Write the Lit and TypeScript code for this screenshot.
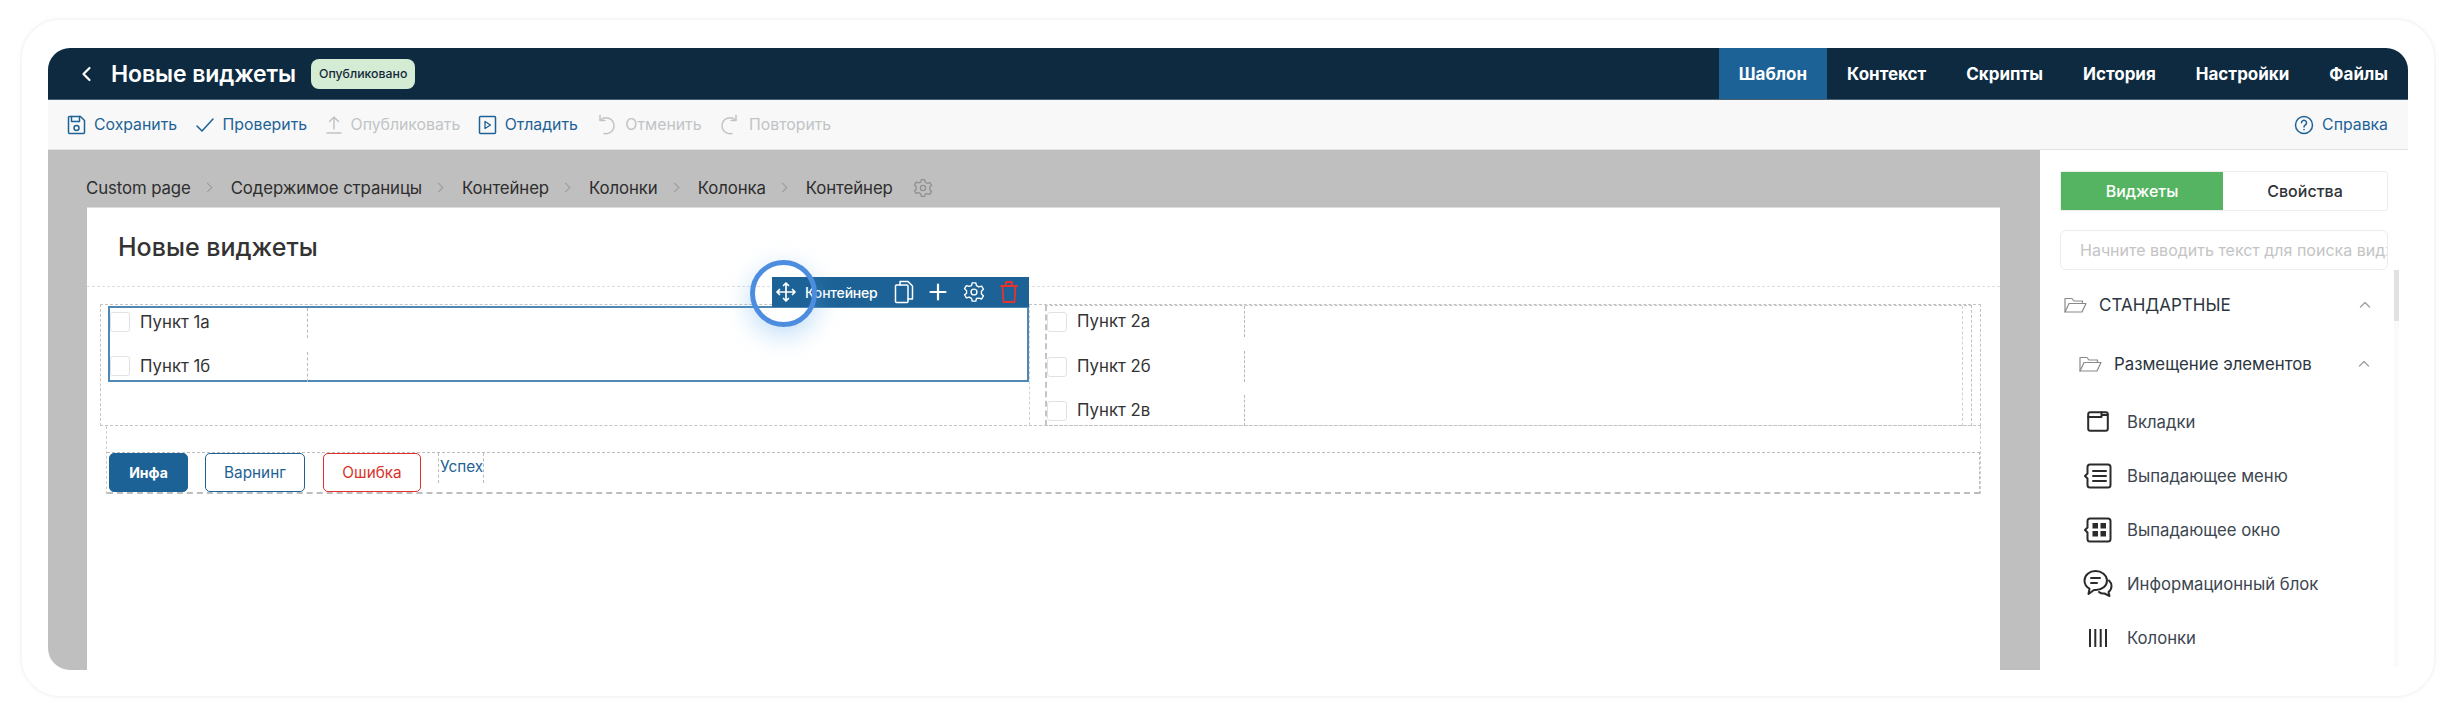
import { LitElement, html, css, svg } from "lit";
import { customElement } from "lit/decorators.js";

const sv = (w: number, h: number, vb: string, body: unknown, cls = "") =>
  html`<svg class="ic ${cls}" width=${w} height=${h} viewBox=${vb} fill="none" stroke="currentColor" stroke-width="1.500" stroke-linecap="round" stroke-linejoin="round">${body}</svg>`;

const icons = {
  save: () => sv(19, 20, "0 0 19 20", svg`<path d="M2.500 1.500h11l4 4v12a1 1 0 0 1-1 1h-14a1 1 0 0 1-1-1v-15a1 1 0 0 1 1-1z"/><path d="M4.500 1.500v5h8v-5"/><circle cx="9.500" cy="13" r="2.500"/>`),
  check: () => sv(20, 18, "0 0 20 18", svg`<path d="M2 10l5 5L18 3"/>`),
  up: () => sv(18, 20, "0 0 18 20", svg`<path d="M9 14V2M4.500 6.500L9 2l4.500 4.500M2 18h14"/>`),
  debug: () => sv(19, 20, "0 0 19 20", svg`<rect x="1.500" y="1.500" width="16" height="17" rx="1"/><path d="M7 6.500l5.500 3.500L7 13.500z" stroke-width="1.300"/>`),
  undo: () => sv(22, 22, "0 0 22 22", svg`<path d="M6 5.500A8 8 0 1 1 9 19.500"/><path d="M5 1.500v5h5"/>`),
  redo: () => sv(22, 22, "0 0 22 22", svg`<path d="M16 5.500A8 8 0 1 0 13 19.500"/><path d="M17 1.500v5h-5"/>`),
  help: () => sv(20, 20, "0 0 20 20", svg`<circle cx="10" cy="10" r="8.500"/><path d="M7.500 7.800a2.500 2.500 0 1 1 3.900 2.100c-.9.600-1.400 1-1.400 2"/><path d="M10 14.600v.1"/>`),
  gear: (s = 20) => sv(s, s, "0 0 24 24", svg`<circle cx="12" cy="12" r="3.200"/><path d="M10 2h4l.7 3 2.600 1.500 3-.9 2 3.400-2.200 2.100v3l2.200 2.100-2 3.400-3-.9L14.700 19l-.7 3h-4l-.7-3-2.600-1.500-3 .9-2-3.400L3.900 13.500v-3L1.700 8.400l2-3.400 3 .9L9.300 5z"/>`),
  move: () => sv(22, 22, "0 0 22 22", svg`<path d="M11 2v18M2 11h18M8.500 4.500L11 2l2.500 2.500M8.500 17.500L11 20l2.500-2.500M4.500 8.500L2 11l2.500 2.500M17.500 8.500L20 11l-2.500 2.500" stroke-width="1.700"/>`),
  copy: () => sv(20, 24, "0 0 20 24", svg`<path d="M6 5V1.500h8L18.500 6v13H14"/><rect x="1.500" y="5" width="12.500" height="17.500" rx="1"/>`),
  plus: () => sv(18, 18, "0 0 18 18", svg`<path d="M9 1.500v15M1.500 9h15" stroke-width="2.200"/>`),
  trash: () => sv(18, 24, "0 0 18 24", svg`<path d="M2.500 6l1 16h11l1-16M1 6h16M6 6V2h6v4" stroke-width="1.800"/>`),
  folder: () => sv(24, 18, "0 0 24 18", svg`<path d="M2 16V2.500h7l2 2.500h8.500v2.500" stroke-width="1.200"/><path d="M2 16l4-8.500h17L19 16z" stroke-width="1.200"/>`),
  chev: () => sv(12, 8, "0 0 12 8", svg`<path d="M1.500 6L6 1.500 10.500 6"/>`, "chev"),
  tabs: () => sv(22, 22, "0 0 22 22", svg`<rect x="1.200" y="1.200" width="19.600" height="18.600" rx="2" stroke-width="2"/><path d="M1.200 6h13.300V1.200M14.500 4h6" stroke-width="2"/>`),
  menu: () => sv(28, 26, "0 0 28 26", svg`<path d="M6 1.500h18a2.500 2.500 0 0 1 2.500 2.500v18a2.500 2.500 0 0 1-2.500 2.500H6A2.500 2.500 0 0 1 3.500 22v-6.500L1 13l2.500-2.500V4A2.500 2.500 0 0 1 6 1.500z" stroke-width="2"/><path d="M9 8h13M9 13h13M9 18h13" stroke-width="2"/>`),
  grid: () => sv(28, 26, "0 0 28 26", svg`<path d="M6 1.500h18a2.500 2.500 0 0 1 2.500 2.500v18a2.500 2.500 0 0 1-2.500 2.500H6A2.500 2.500 0 0 1 3.500 22v-6.500L1 13l2.500-2.500V4A2.500 2.500 0 0 1 6 1.500z" stroke-width="2"/><rect x="8.500" y="6" width="5.500" height="5.500" fill="currentColor" stroke="none"/><rect x="16.500" y="6" width="5.500" height="5.500" fill="currentColor" stroke="none"/><rect x="8.500" y="14" width="5.500" height="5.500" fill="currentColor" stroke="none"/><rect x="16.500" y="14" width="5.500" height="5.500" fill="currentColor" stroke="none"/>`),
  chat: () => sv(30, 30, "0 0 30 30", svg`<path d="M12.500 2C6.500 2 1.500 6 1.500 11.500c0 3.500 2 6.500 5 8.200L5.500 25l5.500-4h2c6 0 11-4 11-9.500S18.500 2 12.500 2z" stroke-width="2"/><path d="M8 9h9M8 14h6" stroke-width="2"/><path d="M26 11.500c1.500 1.500 2.500 3.500 2.500 5.500 0 2.500-1 4.500-3 6l1 4-5-2.500c-2 .3-4-.2-5.500-1.500" stroke-width="2"/>`),
  cols: () => sv(20, 20, "0 0 20 20", svg`<path d="M2 1v18M7.300 1v18M12.700 1v18M18 1v18" stroke-width="2" stroke-linecap="butt"/>`),
};

const actions = [
  { i: icons.save, t: "Сохранить", off: false },
  { i: icons.check, t: "Проверить", off: false },
  { i: icons.up, t: "Опубликовать", off: true },
  { i: icons.debug, t: "Отладить", off: false },
  { i: icons.undo, t: "Отменить", off: true },
  { i: icons.redo, t: "Повторить", off: true },
];
const tabs = ["Шаблон", "Контекст", "Скрипты", "История", "Настройки", "Файлы"];
const crumbs = ["Custom page", "Содержимое страницы", "Контейнер", "Колонки", "Колонка", "Контейнер"];
const widgets = [
  { i: icons.tabs, t: "Вкладки" },
  { i: icons.menu, t: "Выпадающее меню" },
  { i: icons.grid, t: "Выпадающее окно" },
  { i: icons.chat, t: "Информационный блок" },
  { i: icons.cols, t: "Колонки" },
];

@customElement("app-root")
export class AppRoot extends LitElement {
  static styles = css`
    :host {
      display: block;
      width: 2456px;
      height: 718px;
      box-sizing: border-box;
      padding: 18px 20px 20px;
      background: #fff;
      font-family: Inter, "Noto Sans", sans-serif;
      color: #2e3338;
      overflow: hidden;
    }
    * { box-sizing: border-box; }
    .ic { display: block; flex: none; }
    .card {
      height: 680px;
      border-radius: 40px;
      border: 2px solid #f7f7f7;
      box-shadow: 0 0 6px rgba(0, 0, 0, 0.025);
      padding: 28px 26px 26px 26px;
    }
    .app {
      height: 622px;
      border-radius: 22px;
      overflow: hidden;
      display: flex;
      flex-direction: column;
    }
    .header {
      height: 52px;
      flex: none;
      background: #0d2a40;
      border-bottom: 1px solid #4a6276;
      display: flex;
      align-items: stretch;
      color: #fff;
    }
    .back { width: 23px; margin-left: 27px; margin-right: 13px; align-self: center; }
    .title { align-self: center; font-size: 23px; font-weight: 600; letter-spacing: -0.1px; }
    .badge {
      align-self: center;
      margin-left: 15px;
      height: 30px;
      padding: 0 8px;
      display: flex;
      align-items: center;
      background: #d4ecd4;
      border-radius: 8px;
      color: #15293a;
      font-size: 12.300px;
      font-weight: 500;
    }
    .tabs { margin-left: auto; display: flex; }
    .tab {
      display: flex;
      align-items: center;
      padding: 0 20px;
      font-size: 17px;
      font-weight: 700;
    }
    .tab.on { background: #1d6296; }
    .bar {
      height: 50px;
      flex: none;
      background: #f8f8f8;
      border-bottom: 1px solid #e3e3e3;
      display: flex;
      align-items: center;
      padding: 0 20px 0 19px;
      gap: 17.500px;
      color: #1d6296;
      font-size: 15.800px;
    }
    .act { display: flex; align-items: center; gap: 8px; }
    .act.off { color: #c0c4c6; }
    .act.help { margin-left: auto; }
    .body { flex: 1; display: flex; min-height: 0; }
    .canvas {
      flex: 1;
      background: #bfbfbf;
      padding: 0 40px 0 39px;
      display: flex;
      flex-direction: column;
      min-width: 0;
    }
    .crumbs {
      height: 57px;
      flex: none;
      display: flex;
      align-items: center;
      padding-top: 18px;
      margin-left: -1px;
      font-size: 16.800px;
      color: #2e2e2e;
      letter-spacing: -0.1px;
    }
    .sep { width: 7px; height: 7px; margin: 0 20px 0 13px; border-top: 1px solid #9a9a9a; border-right: 1px solid #9a9a9a; transform: rotate(45deg); }
    .crumbs .ic { color: #8f8f8f; margin-left: 20px; }
    .page { flex: 1; background: #fff; border-top: 1px solid #dcdcdc; min-height: 0; }
    .page-title {
      height: 79px;
      border-bottom: 1px dashed #dedede;
      padding: 0 0 1px 31px;
      display: flex;
      align-items: center;
      font-size: 25px;
      font-weight: 500;
      color: #333;
    }
    .work { padding: 17px 19px 0 13px; }
    .cols {
      height: 122px;
      display: flex;
      border: 1px dashed #c4c4c4;
    }
    .col1 { width: 929px; flex: none; border-right: 1px dashed #d0d0d0; padding: 1px 0 0 7px; }
    .sel {
      position: relative;
      height: 76px;
      border: 2px solid #4f87b5;
    }
    .col2 { flex: 1; padding: 0 8px 0 15px; }
    .inner { height: 121px; border: 1px dashed #c4c4c4; padding-right: 8px; border-left-width: 2px; }
    .inner2 { height: 120px; border-right: 1px dashed #d0d0d0; }
    .row {
      display: flex;
      align-items: flex-start;
      width: 198px;
      height: 31px;
      margin-bottom: 13.500px;
      border-right: 1px dashed #b8b8b8;
      font-size: 16.800px;
      color: #333;
    }
    .row:last-child { margin-bottom: 0; }
    .cb {
      width: 20px;
      height: 20px;
      margin: 6px 10px 0 0;
      border: 1px solid #e2e2e2;
      border-radius: 3px;
      flex: none;
      background: #fff;
    }
    .row span { line-height: 30px; }
    .sel .row { height: 30px; margin-bottom: 13.500px; }
    .sel .row:last-child { height: 31px; margin-bottom: 0; }
    .sel .cb { margin-top: 4px; }
    .sel .row span { line-height: 28px; }
    .tool {
      position: absolute;
      left: 662px;
      top: -31px;
      width: 257px;
      height: 30px;
      background: #1d6296;
      color: #fff;
      display: flex;
      align-items: center;
      padding-left: 3px;
      font-size: 14px;
      font-weight: 500;
    }
    .tool .name { margin-left: 8px; width: 76px; letter-spacing: -0.2px; }
    .tool .copy { margin-left: 13px; }
    .tool .plus { margin-left: 15px; }
    .tool .gear { margin-left: 16px; }
    .tool .trash { margin-left: 15px; color: #e8322b; }
    .ring {
      position: absolute;
      left: 640px;
      top: -48px;
      width: 67px;
      height: 67px;
      border-radius: 50%;
      border: 5px solid #4d8de0;
      box-shadow: 0 8px 26px rgba(92, 170, 232, 0.4);
    }
    .lower {
      margin-left: 6px;
      padding-top: 26px;
      border-left: 1px dashed #cfcfcf;
      border-right: 1px dashed #cfcfcf;
    }
    .btns {
      height: 42px;
      display: flex;
      align-items: flex-start;
      border-top: 1px dashed #bdbdbd;
      border-bottom: 2px dashed #bdbdbd;
      border-right: 1px dashed #bdbdbd;
      padding-left: 2px;
      font-size: 15.300px;
    }
    .btn {
      height: 39px;
      border-radius: 5px;
      display: flex;
      align-items: center;
      justify-content: center;
      border: 1px solid;
    }
    .info { width: 79px; background: #1d6296; border-color: #1d6296; color: #fff; font-weight: 700; font-size: 14px; }
    .warn { width: 100px; margin-left: 17px; border-color: #1d6296; color: #1d6296; }
    .err { width: 98px; margin-left: 18px; border-color: #e2302a; color: #d9322a; }
    .ok {
      width: 46px;
      height: 30px;
      margin-left: 17px;
      padding-left: 1px;
      border-left: 1px dashed #bbb;
      border-right: 1px dashed #bbb;
      color: #1d6296;
      line-height: 28px;
    }
    .side {
      width: 368px;
      flex: none;
      background: #fff;
      padding: 21px 20px 0 20px;
      position: relative;
      display: flex;
      flex-direction: column;
    }
    .seg {
      display: flex;
      height: 40px;
      flex: none;
      border: 1px solid #ececec;
      border-radius: 3px;
      font-size: 16px;
      font-weight: 500;
    }
    .seg div { flex: 1; display: flex; align-items: center; justify-content: center; }
    .seg .on { background: #55b461; color: #fff; flex: 0 0 162px; }
    .search {
      height: 40px;
      flex: none;
      margin-top: 19px;
      border: 1px solid #ececec;
      border-radius: 6px;
      display: flex;
      align-items: center;
      padding-left: 19px;
      color: #c4c4c4;
      font-size: 16px;
      white-space: nowrap;
      overflow: hidden;
    }
    .track {
      position: absolute;
      right: 9px;
      top: 120px;
      width: 5px;
      bottom: 0;
      background: #fafafa;
    }
    .thumb { height: 51px; background: #e2e2e2; }
    .group {
      display: flex;
      align-items: center;
      height: 24px;
      color: #2b3640;
      font-size: 17px;
      position: relative;
    }
    .group .ic:first-child { color: #8a8a8a; margin-right: 12px; }
    .group .chev { position: absolute; left: 296px; color: #a5a5a5; }
    .g1 { margin: 23px 0 0 3px; }
    .g2 { margin: 35px 0 0 18px; font-size: 16.800px; }
    .g2 .chev { left: 280px; }
    .list { margin-top: 18.500px; }
    .item {
      display: flex;
      align-items: center;
      height: 54px;
      font-size: 16.700px;
      color: #3b4650;
    }
    .item .slot { width: 36px; margin-left: 20px; margin-right: 11px; display: flex; justify-content: center; color: #2b2b2b; }
  `;

  private rows(items: string[]) {
    return items.map((t) => html`<div class="row"><i class="cb"></i><span>${t}</span></div>`);
  }

  render() {
    return html`
      <div class="card">
        <div class="app">
          <header class="header">
            <svg class="ic back" width="12" height="18" viewBox="0 0 12 18" fill="none" stroke="#fff" stroke-width="2.200" stroke-linecap="round" stroke-linejoin="round"><path d="M9 3L3 9l6 6" /></svg>
            <div class="title">Новые виджеты</div>
            <div class="badge">Опубликовано</div>
            <nav class="tabs">
              ${tabs.map((t, i) => html`<div class="tab ${i === 0 ? "on" : ""}">${t}</div>`)}
            </nav>
          </header>
          <div class="bar">
            ${actions.map((a) => html`<div class="act ${a.off ? "off" : ""}">${a.i()}<span>${a.t}</span></div>`)}
            <div class="act help">${icons.help()}<span>Справка</span></div>
          </div>
          <div class="body">
            <main class="canvas">
              <div class="crumbs">
                ${crumbs.map((c, i) => html`<span>${c}</span>${i < crumbs.length - 1 ? html`<i class="sep"></i>` : ""}`)}
                ${icons.gear(20)}
              </div>
              <div class="page">
                <div class="page-title">Новые виджеты</div>
                <div class="work">
                  <div class="cols">
                    <div class="col1">
                      <div class="sel">
                        ${this.rows(["Пункт 1а", "Пункт 1б"])}
                        <div class="tool">
                          ${icons.move()}<span class="name">Контейнер</span>
                          <span class="copy">${icons.copy()}</span>
                          <span class="plus">${icons.plus()}</span>
                          <span class="gear">${icons.gear(22)}</span>
                          <span class="trash">${icons.trash()}</span>
                        </div>
                        <div class="ring"></div>
                      </div>
                    </div>
                    <div class="col2">
                      <div class="inner">
                        <div class="inner2">${this.rows(["Пункт 2а", "Пункт 2б", "Пункт 2в"])}</div>
                      </div>
                    </div>
                  </div>
                  <div class="lower">
                    <div class="btns">
                      <div class="btn info">Инфа</div>
                      <div class="btn warn">Варнинг</div>
                      <div class="btn err">Ошибка</div>
                      <div class="ok">Успех</div>
                    </div>
                  </div>
                </div>
              </div>
            </main>
            <aside class="side">
              <div class="seg"><div class="on">Виджеты</div><div>Свойства</div></div>
              <div class="search">Начните вводить текст для поиска виджета</div>
              <div class="track"><div class="thumb"></div></div>
              <div class="group g1">${icons.folder()}<span>СТАНДАРТНЫЕ</span>${icons.chev()}</div>
              <div class="group g2">${icons.folder()}<span>Размещение элементов</span>${icons.chev()}</div>
              <div class="list">
                ${widgets.map((w) => html`<div class="item"><span class="slot">${w.i()}</span><span>${w.t}</span></div>`)}
              </div>
            </aside>
          </div>
        </div>
      </div>
    `;
  }
}
